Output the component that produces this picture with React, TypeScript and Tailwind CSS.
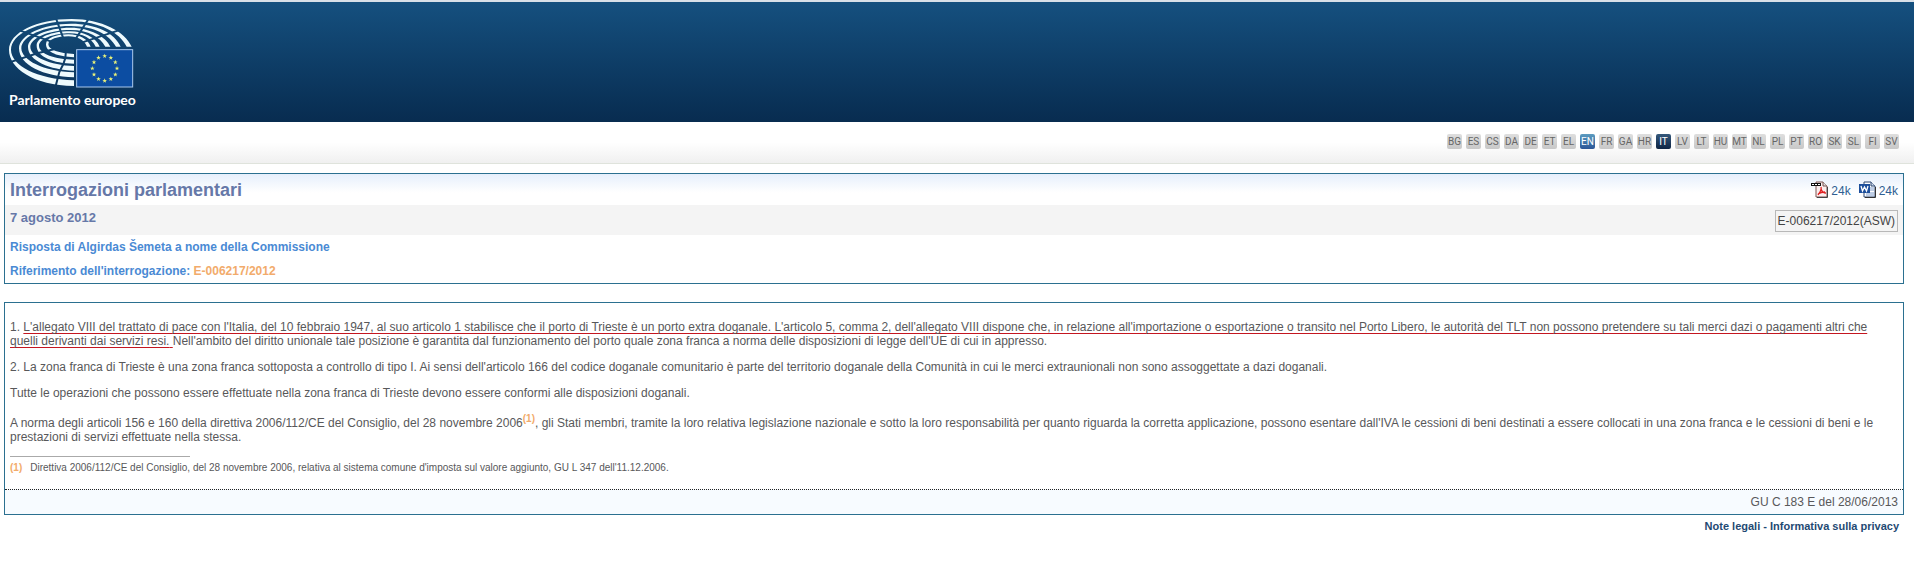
const languages = ["BG", "ES", "CS", "DA", "DE", "ET", "EL", "EN", "FR", "GA", "HR", "IT", "LV", "LT", "HU", "MT", "NL", "PL", "PT", "RO", "SK", "SL", "FI", "SV"];

// five nested rings of the hemicycle, outer to inner
const rings = [
  "M222 258 C100 256 27 205 27 150 C27 98 110 57 215 57 C305 57 375 95 395 140 L380 140 C358 97 300 65 215 64 C120 62 33 100 33 150 C33 195 110 238 222 241 Z",
  "M222 232 C130 230 57 195 57 145 C57 105 130 71 213 71 C290 71 345 100 362 140 L348 140 C328 105 285 79 213 78 C135 77 64 108 64 145 C64 180 130 215 222 217 Z",
  "M222 212 C150 210 84 182 84 141 C84 110 140 83 212 83 C270 83 318 110 331 140 L316 140 C301 112 265 90 212 90 C145 90 91 115 91 141 C91 170 150 196 222 198 Z",
  "M222 191 C160 190 110 170 110 137 C110 112 155 94 210 94 C250 94 288 112 299 140 L287 140 C275 115 248 100 210 100 C160 100 117 117 117 137 C117 162 165 177 222 179 Z",
  "M222 172 C175 170 138 158 138 133 C138 113 170 103 205 103 C240 103 264 118 272 140 L261 140 C255 122 235 109 205 109 C173 109 145 117 145 133 C145 150 178 160 222 162 Z",
];

const stars = Array.from({ length: 12 }, (_, i) => {
  const a = (i * Math.PI) / 6;
  return { x: 314 + 37 * Math.sin(a), y: 205 - 37 * Math.cos(a) };
});

const Logo = () => (
  <svg viewBox="27 54 375 210" className="h-[70px] w-[125px]" aria-hidden="true">
    <mask id="gaps" maskUnits="userSpaceOnUse" x="0" y="0" width="480" height="390">
      <rect width="480" height="390" fill="#fff" />
      <g stroke="#000" strokeWidth="6" fill="none">
        <path d="M198 150 L196 174 L190 192 L178 216 L166 262" />
        <path d="M165 147 L112 160 L20 190" />
        <path d="M160 127 L50 88" />
        <path d="M190 115 L166 50" />
        <path d="M228 115 L270 50" />
        <path d="M238 130 L365 88" />
      </g>
    </mask>
    <g fill="#eefafd" mask="url(#gaps)">
      {rings.map((d) => (
        <path key={d} d={d} />
      ))}
    </g>
    <rect x="230" y="149" width="168" height="112" fill="#0c4da2" stroke="#a9c8ee" strokeWidth="3" />
    {stars.map((s, i) => (
      <path
        key={i}
        transform={`translate(${s.x} ${s.y})`}
        d="M0-7L1.8-2 7-2 2.8 1 4.3 6 0 3-4.3 6-2.8 1-7-2-1.8-2Z"
        fill="#e9f27a"
      />
    ))}
  </svg>
);

const PdfIcon = () => (
  <svg width="18" height="17" viewBox="0 0 18 17" aria-hidden="true">
    <path d="M5 1h7l4 4v11H5z" fill="#fbeeee" stroke="#7a5550" />
    <path d="M12 1v4h4" fill="#ddd" stroke="#7a5550" />
    <path d="M7 14C9 11 11 9 10 6M10 8c1 3 3 4 5 4M7 13c3-2 5-2 7-2" stroke="#e02020" strokeWidth="1.3" fill="none" />
    <path d="M16.5 6v10.5H6" stroke="#444" fill="none" />
    <path d="M0 2h10v3H0z" fill="#111" />
    <path d="M1 3.5h8" stroke="#fff" strokeDasharray="2 1" />
  </svg>
);

const WordIcon = () => (
  <svg width="18" height="17" viewBox="0 0 18 17" aria-hidden="true">
    <path d="M5 1h7l4 4v11H5z" fill="#fff" stroke="#2d4670" />
    <path d="M12 1v4h4" fill="#cdd8ea" stroke="#2d4670" />
    <path d="M11 7h4M11 9h4M7 12h8M7 14h8" stroke="#7f9ccc" />
    <path d="M16.5 6v10.5H6" stroke="#333" fill="none" />
    <path d="M0 3h11v9H0z" fill="#1d4f9c" />
    <path d="M2 5l1.5 5 2-4 2 4 1.5-5" stroke="#fff" strokeWidth="1.3" fill="none" />
  </svg>
);

const LangBar = () => (
  <nav className="flex h-[42px] items-start justify-end gap-1 border-b border-[#dfe3dc] bg-linear-to-b from-white from-50% to-[#f0f0f0] pt-3 pr-[15px]">
    {languages.map((l) => (
      <a
        key={l}
        href="#"
        className={`flex size-[15px] items-center justify-center rounded-[2px] font-['Roboto',sans-serif] text-[10px] leading-none ${
          l === "EN"
            ? "bg-linear-to-b from-[#5d9cc0] to-[#2b5596] text-white"
            : l === "IT"
              ? "bg-linear-to-b from-[#35597c] to-[#0f2544] text-white"
              : "bg-linear-to-b from-[#dedede] to-[#c8c8c8] text-[#666]"
        }`}
      >
        {l}
      </a>
    ))}
  </nav>
);

const App = () => {
  return (
    <div className="bg-white font-['Liberation_Sans',Arial,sans-serif] text-xs leading-[14px] text-[#58585a]">
      <header className="border-t-2 border-[#d9e0e8] bg-linear-to-b from-[#15507f] to-[#082c50] pt-4 pb-3 pl-[9px] text-white">
        <Logo />
        <p className="pt-[2px] font-['Lato',sans-serif] text-sm leading-5 font-bold">Parlamento europeo</p>
      </header>
      <LangBar />

      <main className="mt-[9px] mr-[10px] ml-1">
        <section className="border border-[#2b7090]">
          <div className="flex h-[31px] items-center justify-between bg-linear-to-b from-[#e6effc] to-white to-60% px-[5px]">
            <h1 className="text-lg leading-5 font-bold text-[#6678a8]">Interrogazioni parlamentari</h1>
            <div className="flex gap-2 text-xs leading-[14px] text-[#2f5f93]">
              <a href="#" className="flex items-end gap-[2px]">
                <PdfIcon /> 24k
              </a>
              <a href="#" className="flex items-end gap-[2px]">
                <WordIcon /> 24k
              </a>
            </div>
          </div>
          <div className="flex h-[30px] items-start justify-between bg-[#f4f4f4] px-[5px]">
            <h2 className="pt-[6px] text-[13px] font-bold text-[#6678a8]">7 agosto 2012</h2>
            <span className="mt-[5px] border border-[#b8b8b8] px-[2px] py-[2px] text-xs text-[#444]">E-006217/2012(ASW)</span>
          </div>
          <div className="px-[5px] text-xs leading-6 font-bold text-[#4a8ad4]">
            <p>Risposta di Algirdas Šemeta a nome della Commissione</p>
            <p>
              Riferimento dell'interrogazione:{" "}
              <a href="#" className="text-[#f2ab6b]">
                E-006217/2012
              </a>
            </p>
          </div>
        </section>

        <section className="mt-[18px] border border-[#2b7090]">
          <div className="flex flex-col gap-3 px-[5px] pt-[17px] pb-[14px]">
            <p>
              1.{" "}
              <span className="underline decoration-[#c41620] decoration-1 underline-offset-2 [text-decoration-skip-ink:none]">
                L'allegato VIII del trattato di pace con l'Italia, del 10 febbraio 1947, al suo articolo 1 stabilisce che il porto di Trieste è un porto extra doganale. L'articolo 5, comma 2, dell'allegato VIII dispone che, in relazione all'importazione o esportazione o transito nel Porto Libero, le autorità del TLT non possono pretendere su tali merci dazi o pagamenti altri che quelli derivanti dai servizi resi.{" "}
              </span>
              Nell'ambito del diritto unionale tale posizione è garantita dal funzionamento del porto quale zona franca a norma delle disposizioni di legge dell'UE di cui in appresso.
            </p>
            <p>
              2. La zona franca di Trieste è una zona franca sottoposta a controllo di tipo I. Ai sensi dell'articolo 166 del codice doganale comunitario è parte del territorio doganale della Comunità in cui le merci extraunionali non sono assoggettate a dazi doganali.
            </p>
            <p>Tutte le operazioni che possono essere effettuate nella zona franca di Trieste devono essere conformi alle disposizioni doganali.</p>
            <p>
              A norma degli articoli 156 e 160 della direttiva 2006/112/CE del Consiglio, del 28 novembre 2006
              <sup className="top-0 align-super text-[10px] leading-[14px] font-bold">
                <a href="#nota" className="text-[#f2ab6b]">
                  (1)
                </a>
              </sup>
              , gli Stati membri, tramite la loro relativa legislazione nazionale e sotto la loro responsabilità per quanto riguarda la corretta applicazione, possono esentare dall'IVA le cessioni di beni destinati a essere collocati in una zona franca e le cessioni di beni e le prestazioni di servizi effettuate nella stessa.
            </p>
            <div id="nota" className="text-[10px]">
              <hr className="mb-1 w-[180px] border-[#aaa]" />
              <span className="mr-2 font-bold text-[#f2ab6b]">(1)</span>
              Direttiva 2006/112/CE del Consiglio, del 28 novembre 2006, relativa al sistema comune d'imposta sul valore aggiunto, GU L 347 dell'11.12.2006.
            </div>
          </div>
          <div className="border-t border-dotted border-[#222] bg-[#f7fbff] p-[5px] text-right">GU C 183 E del 28/06/2013</div>
        </section>

        <footer className="mt-1 pr-[5px] text-right text-[11px] font-bold text-[#1f4a73]">
          <a href="#">Note legali</a> - <a href="#">Informativa sulla privacy</a>
        </footer>
      </main>
    </div>
  );
};

export default App;
